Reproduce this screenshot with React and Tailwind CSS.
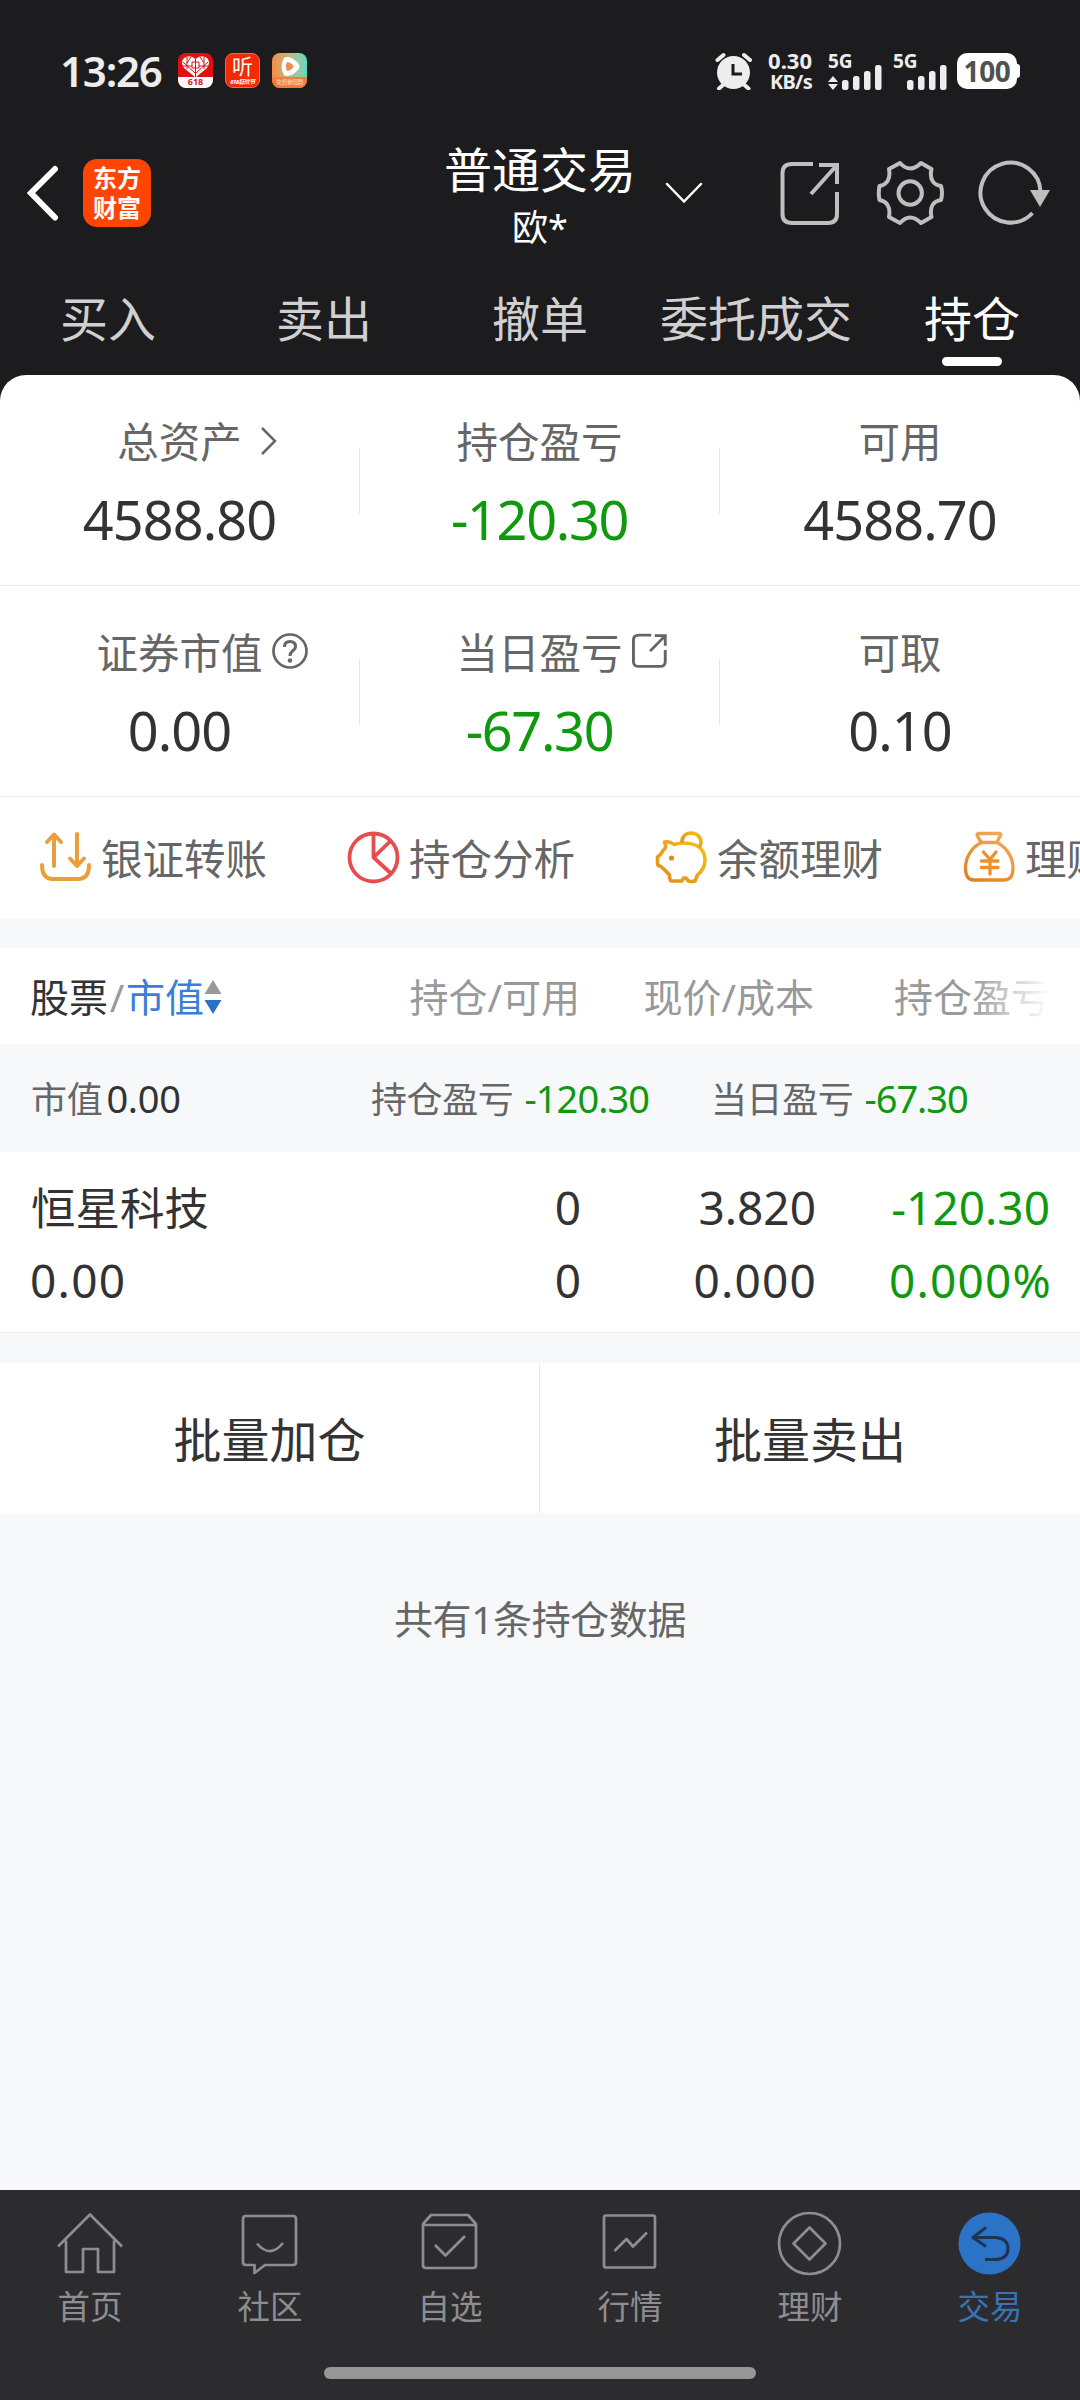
import clsx from 'clsx';

const tabs = ['买入', '卖出', '撤单', '委托成交', '持仓'];

const stats = [
    [
        { label: '总资产', value: '4588.80', icon: 'chevron' },
        { label: '持仓盈亏', value: '-120.30', green: true },
        { label: '可用', value: '4588.70' },
    ],
    [
        { label: '证券市值', value: '0.00', icon: 'help' },
        { label: '当日盈亏', value: '-67.30', green: true, icon: 'export' },
        { label: '可取', value: '0.10' },
    ],
];

const ExportIcon = ({ className, strokeWidth = 4 }) => (
    <svg viewBox="0 0 60 66" preserveAspectRatio="none" className={className} fill="none" stroke="currentColor" strokeWidth={strokeWidth}>
        <path d="M33 4H12Q2.500 4 2.500 13V54Q2.500 63 12 63H48Q57 63 57 54V32" />
        <path d="M39 5H57V24M57 5L31 34" />
    </svg>
);

const SignalBars = () => (
    <svg viewBox="0 0 40 26" className="w-[40px] h-[26px]" fill="#ededed">
        <rect x="0" y="15" width="6.500" height="10" rx="2.500" />
        <rect x="11" y="11" width="6.500" height="14" rx="2.500" />
        <rect x="22" y="6" width="6.500" height="19" rx="2.500" />
        <rect x="33" y="0" width="6.500" height="25" rx="2.500" />
    </svg>
);

const StatusBar = () => (
    <div className="h-[140px] shrink-0 flex items-start pt-[52px] pl-[60px] pr-[60px] text-[#ededed]">
        <span className="w-[118px] text-[42px] leading-[37px] font-semibold tracking-[-1.2px]">13:26</span>

        {/* notification icons */}
        <div className="flex gap-[12px] pt-px">
            <div className="w-[35px] h-[35px] rounded-[8px] bg-[#e00f14] overflow-hidden flex flex-col items-center">
                <svg viewBox="0 0 35 24" className="w-[35px] h-[24px] shrink-0">
                    <path d="M17.500 24.500L6 15Q2 9 6 5Q12 1 17.500 6Q23 1 29 5Q33 9 29 15Z" fill="#fff" />
                    <path d="M17.500 6V24M5 9L17 20M30 9L18 20M9 4V16M13 4L9 10M26 4V16M22 4L26 10M5 13H14M21 13H30M14 9H21M14 9V15H21V9" stroke="#e00f14" strokeWidth="1" fill="none" />
                </svg>
                <span className="w-full h-[11px] bg-white text-[#d8151b] text-[9px] leading-[9px] font-bold text-center">618</span>
            </div>
            <div className="w-[35px] h-[35px] rounded-[8px] bg-[#f22b05] border border-[#f9674a] flex flex-col items-center text-white">
                <span className="text-[21px] leading-[25px]">听</span>
                <span className="text-[6px] leading-[7px] font-bold italic whitespace-nowrap tracking-[-0.6px]">618狂欢节</span>
            </div>
            <div className="w-[35px] h-[35px] rounded-[8px] bg-linear-to-r from-[#f58a43] to-[#55dcc0] overflow-hidden flex flex-col items-center">
                <svg viewBox="0 0 35 24" className="w-[35px] h-[24px] shrink-0">
                    <path d="M12 5Q17 2 25 9Q30 13 25 18Q18 25 12 22Q7 14 12 5Z" fill="#fff" />
                    <path d="M15 9Q18 9 21 12Q22 14 20 16Q17 18 15 18Q13 13 15 9Z" fill="#f08a4d" />
                </svg>
                <span className="w-full h-[11px] bg-[#f37b3c] text-[#ffdcb8] text-[6px] leading-[10px] text-center whitespace-nowrap tracking-[-0.6px]">免费看短剧</span>
            </div>
        </div>

        <div className="ml-auto flex items-start">
            <svg viewBox="0 0 38 38" className="w-[38px] h-[38px] mr-[12px]">
                <circle cx="18.500" cy="20.500" r="16.500" fill="#ededed" />
                <path d="M2.500 8L8.500 3M35 8L29 3M8 33L4 36.500M29.500 33L33.500 36.500" stroke="#ededed" strokeWidth="4" strokeLinecap="round" />
                <path d="M18 12V22H27" stroke="#1c1c1e" strokeWidth="3" fill="none" />
            </svg>
            <div className="w-[47px] mr-[16px] text-right font-bold whitespace-nowrap">
                <div className="text-[22px] leading-[17px]">0.30</div>
                <div className="text-[20px] leading-[25px] tracking-[-0.7px]">KB/s</div>
            </div>
            <div className="w-[65px] h-[39px] relative">
                <span className="absolute left-0 top-0 text-[19px] leading-[19px] font-bold">5G</span>
                <svg viewBox="0 0 10 14" className="absolute left-0 top-[24px] w-[10px] h-[14px]" fill="#ededed">
                    <path d="M5 0L10 6H0ZM5 14L10 8H0Z" />
                </svg>
                <div className="absolute left-[14px] top-[13px]"><SignalBars /></div>
            </div>
            <div className="w-[64px] h-[39px] relative">
                <span className="absolute left-0 top-0 text-[19px] leading-[19px] font-bold">5G</span>
                <div className="absolute left-[14px] top-[13px]"><SignalBars /></div>
            </div>
            <div className="flex items-center mt-px">
                <span className="w-[60px] h-[36px] rounded-[10px] bg-white text-[#505050] text-[28px] leading-[36px] font-bold text-center tracking-[-0.3px]">100</span>
                <span className="w-[3px] h-[14px] rounded-r-[3px] bg-white" />
            </div>
        </div>
    </div>
);

const Header = () => (
    <div className="h-[140px] shrink-0 flex text-white relative">
        <svg viewBox="0 0 32 56" className="w-[32px] h-[56px] ml-[27px] mt-[25px]" fill="none" stroke="#fff" strokeWidth="6" strokeLinecap="round">
            <path d="M28 4L4 28L28 52.500" />
        </svg>
        <div className="ml-[24px] mt-[19px] w-[68px] h-[68px] rounded-[14px] bg-[#ff4503] flex flex-col items-center justify-center font-bold text-[24px] leading-[30px]">
            <span>东方</span>
            <span>财富</span>
        </div>
        <div className="absolute left-1/2 -translate-x-1/2 top-0 flex flex-col items-center">
            <span className="mt-[3px] text-[48px] leading-[54px]">普通交易</span>
            <span className="mt-[13px] text-[36px] leading-[36px]">欧*</span>
        </div>
        <div className="ml-auto flex text-[#bfbfbf]">
            <svg viewBox="0 0 38 22" className="w-[38px] h-[22px] mt-[42px] mr-[77px]" fill="none" stroke="#fff" strokeWidth="2.500">
                <path d="M2 2L19 19.500L36 2" strokeLinecap="round" />
            </svg>
            <ExportIcon className="w-[60px] h-[66px] mt-[20px] mr-[36px]" />
            <svg viewBox="0 0 68 66" className="w-[68px] h-[66px] mt-[20px] mr-[34px]" fill="none" stroke="currentColor" strokeWidth="4" strokeLinejoin="round">
                <path d="M24 3Q34 14 45 3L55.500 9C53 20 58 25 65 26Q67 33 65 40C58 41 53 46 55.500 57L45 63Q34 52 24 63L13 57C15 46 10 41 3.500 40Q2 33 3.500 26C10 25 15 20 13 9Z" />
                <circle cx="34.200" cy="33" r="11.700" />
            </svg>
            <svg viewBox="0 0 72 66" className="w-[72px] h-[66px] mt-[20px] mr-[30px]" fill="none" stroke="currentColor" strokeWidth="4">
                <path d="M54.500 53A30 30 0 1 1 62.500 32" />
                <path d="M52 30H72L62 47Z" fill="currentColor" stroke="none" />
            </svg>
        </div>
    </div>
);

const Tabs = () => (
    <div className="h-[95px] shrink-0 grid grid-cols-5">
        {tabs.map((tab, i) => (
            <div key={tab} className={clsx('flex flex-col items-center pt-[15px]', i === 4 ? 'text-white' : 'text-[#d0d0d0]')}>
                <span className="text-[48px] leading-[48px]">{tab}</span>
                {i === 4 && <span className="mt-[14px] w-[60px] h-[9px] rounded-full bg-white" />}
            </div>
        ))}
    </div>
);

const StatIcon = ({ type }) => {
    if (type === 'chevron') {
        return (
            <svg viewBox="0 0 18 30" className="absolute left-full top-[5px] ml-[18px] w-[18px] h-[30px]" fill="none" stroke="#666" strokeWidth="2.500">
                <path d="M2 2L15 15L2 28" />
            </svg>
        );
    }
    if (type === 'help') {
        return (
            <svg viewBox="0 0 36 36" className="absolute left-full top-[1px] ml-[9px] w-[36px] h-[36px]" fill="none" stroke="#666" strokeWidth="2.700">
                <circle cx="18" cy="18" r="16.500" />
                <path d="M12.500 14Q12.500 8.500 18 8.500Q23.500 8.500 23.500 13.500Q23.500 16 20.500 18Q18 20 18 23" strokeWidth="3" />
                <circle cx="18" cy="27.500" r="2.200" fill="#666" stroke="none" />
            </svg>
        );
    }
    if (type === 'export') {
        return <ExportIcon strokeWidth={5} className="absolute left-full top-[1px] ml-[9px] w-[35px] h-[35px] text-[#666]" />;
    }
    return null;
};

const StatRow = ({ items }) => (
    <div className="h-[211px] flex border-b border-[#ececec]">
        {items.map((item, i) => (
            <div key={item.label} className="flex-1 flex">
                <div className="flex-1 flex flex-col items-center pt-[46px]">
                    <div className="relative text-[41.5px] leading-[42px] text-[#666]">
                        {item.label}
                        <StatIcon type={item.icon} />
                    </div>
                    <span className={clsx('mt-[29px] text-[54px] leading-[54px]', item.green ? 'tracking-[-1.3px] text-[#0f990f]' : 'tracking-[-0.9px] text-[#333]')}>
                        {item.value}
                    </span>
                </div>
                {i < 2 && <span className="mt-[73px] w-px h-[66px] bg-[#e8e8e8]" />}
            </div>
        ))}
    </div>
);

const TransferIcon = () => (
    <svg viewBox="0 0 54 54" className="w-[54px] h-[54px]" fill="none" stroke="#e9a03c" strokeWidth="4" strokeLinecap="round" strokeLinejoin="round">
        <path d="M16 36V5M9 12L16 4.500L23 12M39 4V35M32 28.500L39 36L46 28.500" />
        <path d="M4 35Q4 49 15 49H40Q51 49 51 35" />
    </svg>
);

const PieIcon = () => (
    <svg viewBox="0 0 54 54" className="w-[54px] h-[54px]" fill="none" stroke="#e84c4c" strokeWidth="3.800">
        <circle cx="27.500" cy="27.500" r="24" />
        <path d="M27.500 4V27.500L44.500 43M27.500 27.500L44 11.500" />
    </svg>
);

const PiggyIcon = () => (
    <svg viewBox="0 0 54 54" className="w-[54px] h-[54px]" fill="none" stroke="url(#pig)" strokeWidth="3.600" strokeLinejoin="round" strokeLinecap="round">
        <defs>
            <linearGradient id="pig" x1="0" y1="1" x2="1" y2="0">
                <stop offset="0" stopColor="#e08a1e" />
                <stop offset="1" stopColor="#f2c21a" />
            </linearGradient>
        </defs>
        <path d="M10.500 12Q16 11 20 14.500Q28 12 35 13.500C46 14.500 51 22 51 30C51 37 47 42 43.500 45L41 51Q38 52 34.500 51L32 48H29.500L28 51H17.500Q15.500 51 15.500 45C11 40 9 38 6 36Q3.500 36 3.500 33V27Q7.500 24 9.500 20Q13 18 10.500 12Z" />
        <path d="M28 11Q29 3 37.500 3Q47 4 47 13L46 16" />
        <circle cx="17.500" cy="28" r="2.600" fill="#e08a1e" stroke="none" />
    </svg>
);

const MoneyBagIcon = () => (
    <svg viewBox="0 0 54 54" className="w-[54px] h-[54px]" fill="none" stroke="url(#bag)" strokeWidth="3.300" strokeLinejoin="round" strokeLinecap="round">
        <defs>
            <linearGradient id="bag" gradientUnits="userSpaceOnUse" x1="5" y1="54" x2="40" y2="0">
                <stop offset="0" stopColor="#e07b1f" />
                <stop offset="1" stopColor="#f0ad5a" />
            </linearGradient>
        </defs>
        <path d="M16 3.500H38Q40 4 37 8L35 12.500H19.500L16.500 8Q14 4 16 3.500Z" />
        <path d="M19.500 12.500C8 18 3.500 29 3.500 38Q3.500 50 12 50H42Q51 50 51 38C51 29 46 18 35 12.500" />
        <path d="M21.500 22L28 29.500L34 22M19.500 31H36M19.500 37.500H36M28 30V44" stroke="#ee8f2c" />
    </svg>
);

const actions = [
    { label: '银证转账', Icon: TransferIcon },
    { label: '持仓分析', Icon: PieIcon },
    { label: '余额理财', Icon: PiggyIcon },
    { label: '理财', Icon: MoneyBagIcon },
];

const QuickActions = () => (
    <div className="h-[121px] flex pl-[38px] overflow-hidden">
        {actions.map(({ label, Icon }) => (
            <div key={label} className="w-[308px] shrink-0 flex pt-[33px]">
                <Icon />
                <span className="ml-[9px] mt-[8px] text-[41.5px] leading-[42px] text-[#666] whitespace-nowrap">{label}</span>
            </div>
        ))}
    </div>
);

const Holdings = () => (
    <>
        <div className="h-[96px] shrink-0 mt-[30px] bg-white flex items-center text-[39px] leading-[40px] text-[#999] pt-px relative">
            <div className="w-[346px] pl-[30px] flex items-center">
                <span className="text-[#333]">股票</span>
                <span className="w-[18px] text-center">/</span>
                <span className="text-[#3a7fd5]">市值</span>
                <svg viewBox="0 0 18 36" className="w-[18px] h-[36px]">
                    <path d="M9 1L17.500 15H0.500Z" fill="#999" />
                    <path d="M9 35L17.500 21H0.500Z" fill="#2a72c3" />
                </svg>
            </div>
            <span className="w-[234px] text-right">持仓/可用</span>
            <span className="w-[234px] text-right">现价/成本</span>
            <span className="w-[236px] text-right">持仓盈亏</span>
            <span className="absolute right-[30px] top-0 h-full w-[80px] bg-linear-to-r from-white/0 to-white" />
        </div>

        {/* totals */}
        <div className="h-[108px] shrink-0 flex items-center pt-[2px] text-[36px] leading-[40px] text-[#666]">
            <div className="w-[371px] pl-[31px] tracking-[-0.3px]">
                市值<span className="ml-[4px] text-[38px] text-[#333]">0.00</span>
            </div>
            <div className="w-[340px]">
                <span className="tracking-[-0.4px]">持仓盈亏</span>
                <span className="ml-[11px] text-[38px] tracking-[-0.9px] text-[#0f990f]">-120.30</span>
            </div>
            <div>
                <span className="tracking-[-0.4px]">当日盈亏</span>
                <span className="ml-[11px] text-[38px] tracking-[-1px] text-[#0f990f]">-67.30</span>
            </div>
        </div>

        <div className="h-[181px] shrink-0 bg-white border-b border-[#e9ebed] pt-[19px] text-[46px] leading-[73px] text-[#333]">
            <div className="flex">
                <span className="w-[346px] pl-[31px] text-[44.5px]">恒星科技</span>
                <span className="w-[235px] text-right">0</span>
                <span className="w-[235px] text-right">3.820</span>
                <span className="w-[234px] text-right text-[#0f990f]">-120.30</span>
            </div>
            <div className="flex">
                <span className="w-[346px] pl-[30px] tracking-[1.3px]">0.00</span>
                <span className="w-[235px] text-right">0</span>
                <span className="w-[236px] text-right tracking-[1.2px]">0.000</span>
                <span className="w-[235px] text-right tracking-[1.2px] text-[#0f990f]">0.000%</span>
            </div>
        </div>

        <div className="h-[150px] shrink-0 mt-[30px] bg-white flex text-[48px] leading-[153px] text-[#333] text-center">
            <button type="button" className="w-[540px] border-r border-[#ececec]">批量加仓</button>
            <button type="button" className="w-[540px]">批量卖出</button>
        </div>

        <p className="mt-[86px] text-center text-[39px] leading-[40px] tracking-[-0.4px] text-[#666]">共有1条持仓数据</p>
    </>
);

const navItems = [
    {
        label: '首页',
        icon: <path d="M1 35.500L33 3.500L65 35.500M9 29.500V61H26V38H41V61H57V29.500" />,
    },
    {
        label: '社区',
        icon: (
            <>
                <path d="M9 5H56Q59 5 59 8V51Q59 54 56 54H28L17.500 62V54H9Q6 54 6 51V8Q6 5 9 5Z" />
                <path d="M20 32.500Q33 48 46 32" />
            </>
        ),
    },
    {
        label: '自选',
        icon: (
            <>
                <path d="M6 13L14 4H51L59 13V54Q59 57 56 57H9Q6 57 6 54ZM6 14H59" />
                <path d="M18 34L28.500 44.500L48 25" />
            </>
        ),
    },
    {
        label: '行情',
        icon: (
            <>
                <rect x="7" y="4.500" width="51" height="52" rx="2" />
                <path d="M17.500 40L29.500 28L36 35.500L50 21.500" />
            </>
        ),
    },
    {
        label: '理财',
        icon: (
            <>
                <circle cx="32.500" cy="32.500" r="30.500" />
                <path d="M32.500 16.500L48.500 32.500L32.500 48.500L16.500 32.500Z" />
            </>
        ),
    },
    {
        label: '交易',
        active: true,
        icon: (
            <>
                <circle cx="32.500" cy="32.500" r="31" fill="#2b73c6" stroke="none" />
                <path d="M29 16.500L16 26.500L29 35.500M16 26.500H39Q51 27.500 51 37.500Q51 48 39 48.500H28" stroke="#1d3552" strokeWidth="3" />
            </>
        ),
    },
];

const BottomNav = () => (
    <nav className="mt-auto h-[210px] shrink-0 bg-[#2c2c2e] flex flex-col items-center">
        <div className="w-full h-[177px] grid grid-cols-6">
            {navItems.map((item) => (
                <div key={item.label} className={clsx('flex flex-col items-center pt-[21px]', item.active ? 'text-[#3a72b5]' : 'text-[#8e8e92]')}>
                    <svg viewBox="0 0 66 66" className="w-[66px] h-[66px]" fill="none" stroke="currentColor" strokeWidth="2.700" strokeLinejoin="round">
                        {item.icon}
                    </svg>
                    <span className="mt-[12px] text-[32.5px] leading-[36px]">{item.label}</span>
                </div>
            ))}
        </div>
        <span className="w-[432px] h-[12px] rounded-full bg-[#969696]" />
    </nav>
);

const App = () => (
    <div className="w-[1080px] h-[2400px] overflow-hidden flex flex-col bg-[#f6f8fa] font-['Noto_Sans','Noto_Sans_CJK_SC',sans-serif]">
        <div className="bg-[#1c1c1e] shrink-0">
            <StatusBar />
            <Header />
            <Tabs />
            <div className="bg-white rounded-t-[26px]">
                <StatRow items={stats[0]} />
                <StatRow items={stats[1]} />
                <QuickActions />
            </div>
        </div>
        <Holdings />
        <BottomNav />
    </div>
);

export default App;
